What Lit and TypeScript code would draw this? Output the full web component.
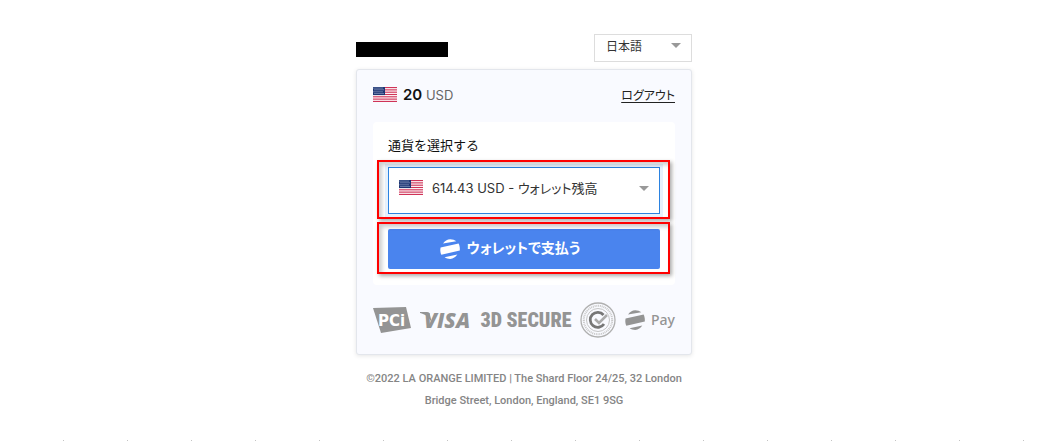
import { LitElement, html, css, svg } from "lit";
import { customElement } from "lit/decorators.js";

const stripes = [0, 2, 4, 6, 8, 10, 12];
const starRows = [1, 3, 5, 7];
const starCols = [1, 3, 5, 7, 9];

const flag = html`
  <svg class="flag" viewBox="0 0 24 16" width="24" height="15" preserveAspectRatio="none" aria-hidden="true">
    <rect width="24" height="16" fill="#fff" />
    ${stripes.map((n) => svg`<rect y=${(n * 16) / 13} width="24" height=${16 / 13} fill="#cf3358" />`)}
    <rect width="12" height="8.6" fill="#1f3774" />
    ${starRows.map((y) => starCols.map((x) => svg`<circle cx=${x + (y % 4 === 3 ? 1 : 0)} cy=${y} r=".55" fill="#c3cde4" />`))}
  </svg>
`;

const walletMark = html`
  <svg viewBox="0 0 20 20" width="20" height="20" fill="currentColor" aria-hidden="true">
    <path d="M3 4.600C4.800 1.800 7.200.2 10.300.2c2.400 0 4.400.7 6 2z" />
    <path d="M.6 8.600 18.600 4.400C19.600 6.300 20 8.700 19.800 11.400L1.300 15.700C.2 13.600.1 10.900.6 8.600z" />
    <path d="M4.600 18.300 17.300 15.600C15.600 18.300 13.300 19.800 10.200 19.900c-2.100 0-4-.6-5.600-1.600z" />
  </svg>
`;

@customElement("app-root")
export class AppRoot extends LitElement {
  static styles = css`
    :host {
      display: block;
      box-sizing: border-box;
      min-height: 100vh;
      padding: 34px 22px 20px 16px;
      background: linear-gradient(90deg, transparent 63px, #c4c4c4 63px) left bottom / 64px 1px repeat-x #fff;
      color: #111;
      font-family: Inter, "Noto Sans CJK JP", sans-serif;
      font-size: 13px;
      font-feature-settings: "palt";
    }
    *, *::before, *::after { box-sizing: border-box; }
    .page { max-width: 336px; margin: 0 auto; }
    .top { display: flex; align-items: center; justify-content: space-between; margin-bottom: 7px; }
    .brand { width: 92px; height: 15px; margin-top: 3px; background: #000; }
    .select { position: relative; display: flex; align-items: center; }
    .select::after {
      content: "";
      position: absolute;
      right: 11px;
      margin-bottom: 5px;
      border: 5px solid transparent;
      border-top-color: #999;
      border-bottom: 0;
      pointer-events: none;
    }
    select {
      appearance: none;
      width: 100%;
      margin: 0;
      background: #fff;
      color: #333;
      font: inherit;
      font-feature-settings: inherit;
      outline: 0;
      border-radius: 0;
    }
    .language { width: 98px; font-size: 12px; }
    .language select { height: 28px; padding: 0 24px 4px 11px; border: 1px solid #ddd; }
    .card {
      padding: 16px;
      border: 1px solid #e3e6ec;
      border-radius: 3px;
      background: #f9faff;
      box-shadow: 0 1px 4px #0000001a;
    }
    .summary { display: flex; align-items: center; height: 16px; margin-bottom: 20px; }
    .flag { display: block; flex: none; }
    .amount { margin-left: 6px; color: #666; }
    .amount b { font-size: 15px; font-weight: 600; color: #111; }
    a { margin-left: auto; color: #222; font-size: 12px; text-underline-offset: 2px; }
    .panel { padding: 15px 15px 16px; border-radius: 4px; background: #fff; }
    label { display: block; height: 30px; line-height: 16px; font-feature-settings: normal; }
    .marked { position: relative; }
    .marked::before {
      content: "";
      position: absolute;
      z-index: 1;
      inset: -7px -10px -5px -11px;
      border: 2px solid #f00;
      box-shadow: 2px 2px 4px #0005, inset 3px 3px 4px #0003;
      pointer-events: none;
    }
    .wallet { margin-bottom: 15px; }
    .wallet .flag { position: absolute; left: 11px; top: 13px; }
    .wallet select {
      height: 47px;
      padding: 0 26px 5px 43px;
      border: 1px solid #2b82e0;
      box-shadow: 0 0 0 3px #e6f1fd;
    }
    button {
      display: flex;
      align-items: center;
      justify-content: center;
      gap: 7px;
      width: 100%;
      height: 40px;
      padding: 0 28px 0 0;
      border: 0;
      border-radius: 2px;
      background: #4a84ee;
      color: #fff;
      font: 700 14px Inter, "Noto Sans CJK JP", sans-serif;
      font-feature-settings: inherit;
    }
    button span { padding-bottom: 4px; }
    .badges {
      display: flex;
      align-items: center;
      justify-content: space-between;
      height: 37px;
      margin-top: 16px;
      color: #949494;
      white-space: nowrap;
    }
    .badges svg { display: block; flex: none; }
    .pci { font: 700 15px "DejaVu Sans", sans-serif; }
    .visa { font: italic 800 21px "Open Sans", sans-serif; }
    .secure { font: 900 20px "Liberation Sans Narrow", "Roboto Condensed", "Liberation Sans", sans-serif; }
    .pay { display: flex; align-items: center; gap: 6px; font: 500 14px "Noto Sans", sans-serif; }
    footer {
      margin-top: 13px;
      color: #858585;
      font-family: Roboto, sans-serif;
      font-weight: 500;
      font-size: 11px;
      line-height: 22px;
      text-align: center;
    }
  `;

  render() {
    return html`
      <main class="page">
        <header class="top">
          <div class="brand"></div>
          <div class="select language">
            <select aria-label="言語"><option>日本語</option></select>
          </div>
        </header>
        <section class="card">
          <div class="summary">
            ${flag}
            <span class="amount"><b>20</b> USD</span>
            <a href="#">ログアウト</a>
          </div>
          <form class="panel" @submit=${(e: Event) => e.preventDefault()}>
            <label for="wallet">通貨を選択する</label>
            <div class="marked wallet">
              <div class="select">
                <select id="wallet"><option>614.43 USD - ウォレット残高</option></select>
                ${flag}
              </div>
            </div>
            <div class="marked">
              <button type="submit">${walletMark}<span>ウォレットで支払う</span></button>
            </div>
          </form>
          <div class="badges">
            <svg width="38" height="28" viewBox="0 0 38 28" fill="currentColor">
              <path d="M0 2 33 1 38 22 8 27z" />
              <text class="pci" x="5" y="20" fill="#fff">PCi</text>
            </svg>
            <svg width="52" height="32" viewBox="0 0 52 32" fill="currentColor">
              <path d="M0 8H7C9 8 9.700 9 10 11L12 19C9 13 5 10 0 9z" />
              <text class="visa" x="4" y="24">VISA</text>
            </svg>
            <span class="secure">3D SECURE</span>
            <svg width="36" height="36" viewBox="0 0 36 36" fill="none" stroke="currentColor">
              <circle cx="18" cy="18" r="17" stroke="#b0b0b0" stroke-width="1.300" />
              <circle cx="18" cy="18" r="11.500" stroke="#c4c4c4" />
              <circle cx="18" cy="18" r="14.200" stroke="#c8c8c8" stroke-width="2" stroke-dasharray="1 .8" />
              <path d="M23.500 13A7.500 7.500 0 1 0 24 22" stroke="#777" stroke-width="2.800" />
              <path d="M15 17l4 4 8-8" stroke="#aaa" stroke-width="2.500" />
            </svg>
            <span class="pay">${walletMark}<span>Pay</span></span>
          </div>
        </section>
        <footer>©2022 LA ORANGE LIMITED | The Shard Floor 24/25, 32 London Bridge Street, London, England, SE1 9SG</footer>
      </main>
    `;
  }
}
